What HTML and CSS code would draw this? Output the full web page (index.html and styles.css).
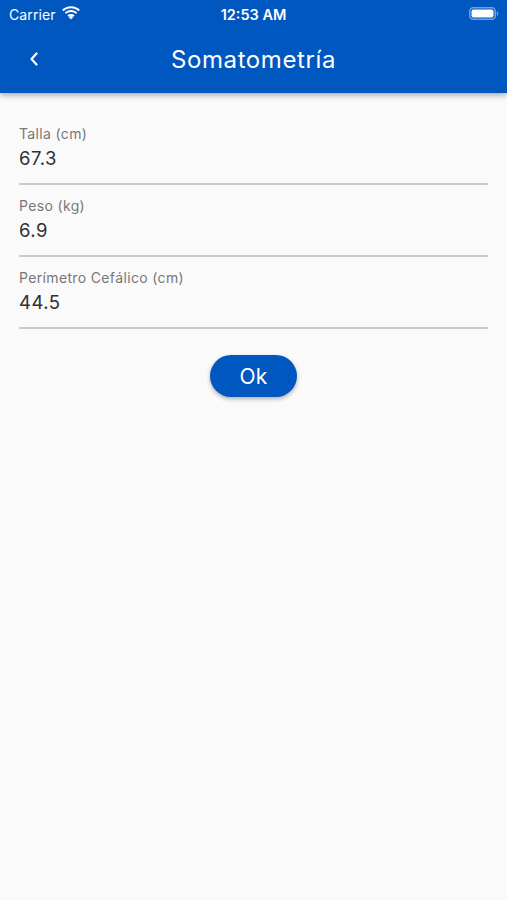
FILE: index.html
```html
<!DOCTYPE html>
<html lang="es">
<head>
    <meta charset="UTF-8">
    <meta name="viewport" content="width=device-width, initial-scale=1.0">
    <title>Somatometría</title>
    <link rel="stylesheet" href="styles.css">
</head>
<body>
    <header class="header">
        <div class="status-bar">
            <div class="status-left">
                <span class="carrier">Carrier</span>
                <svg class="wifi" width="18" height="14" viewBox="0 0 18 14">
                    <path d="M9 2.2c2.9 0 5.6 1.1 7.6 3l1.3-1.4C15.5 1.5 12.4.2 9 .2S2.5 1.5.1 3.8l1.3 1.4c2-1.9 4.7-3 7.6-3z" fill="#fff"/>
                    <path d="M9 6.1c1.9 0 3.6.7 4.9 1.9l1.3-1.4C13.6 5 11.4 4.1 9 4.1S4.4 5 2.8 6.6L4.1 8C5.4 6.8 7.1 6.1 9 6.1z" fill="#fff"/>
                    <path d="M9 10c.9 0 1.7.3 2.3.9L9 13.4 6.7 10.9c.6-.6 1.4-.9 2.3-.9z" fill="#fff"/>
                    <path d="M9 8c1.4 0 2.6.5 3.6 1.4l-1.3 1.4C10.7 10.3 9.9 10 9 10s-1.700.3-2.3.8L5.4 9.4C6.4 8.5 7.6 8 9 8z" fill="#fff"/>
                </svg>
            </div>
            <span class="time">12:53 AM</span>
            <div class="status-right">
                <svg class="battery" width="30" height="13" viewBox="0 0 30 13">
                    <rect x="0.75" y="0.75" width="25.5" height="11.5" rx="3.5" fill="none" stroke="rgba(255,255,255,0.45)" stroke-width="1.5"/>
                    <rect x="2.5" y="2.5" width="22" height="8" rx="2" fill="#fff"/>
                    <path d="M27.8 4.3c.9.3 1.5 1.1 1.5 2.2s-.6 1.9-1.5 2.2z" fill="rgba(255,255,255,0.45)"/>
                </svg>
            </div>
        </div>
        <div class="nav-bar">
            <svg class="back" width="10" height="14" viewBox="0 0 10 14">
                <path d="M7.5 1.5L2.5 7l5 5.5" fill="none" stroke="#fff" stroke-width="2.2" stroke-linecap="round" stroke-linejoin="round"/>
            </svg>
            <h1 class="title">Somatometría</h1>
        </div>
    </header>

    <main class="form">
        <div class="field">
            <div class="label">Talla (cm)</div>
            <div class="value">67.3</div>
        </div>
        <div class="field">
            <div class="label">Peso (kg)</div>
            <div class="value">6.9</div>
        </div>
        <div class="field">
            <div class="label">Perímetro Cefálico (cm)</div>
            <div class="value">44.5</div>
        </div>

        <div class="actions">
            <button class="ok">Ok</button>
        </div>
    </main>
</body>
</html>
```

FILE: styles.css
```css
body {
    margin: 0;
    font-family: Inter, Roboto, sans-serif;
    background-color: #fafafa;
    min-height: 900px;
}
.header {
    background-color: #0057bf;
    color: white;
    box-shadow: 0 2px 6px rgba(0, 0, 0, 0.35);
    position: relative;
}
.status-bar {
    height: 28px;
    display: flex;
    align-items: center;
    justify-content: space-between;
    padding: 0 8px 0 9px;
    position: relative;
}
.status-left {
    display: flex;
    align-items: center;
    gap: 6px;
}
.carrier {
    font-size: 14px;
    letter-spacing: 0.1px;
}
.wifi {
    margin-top: -2px;
}
.time {
    position: absolute;
    left: 0;
    right: 0;
    text-align: center;
    font-size: 14.5px;
    font-weight: 600;
}
.status-right {
    display: flex;
    align-items: center;
    margin-top: -1px;
}
.nav-bar {
    height: 65px;
    display: flex;
    align-items: center;
    justify-content: center;
    position: relative;
}
.back {
    position: absolute;
    left: 29px;
    top: 24px;
}
.title {
    margin: 0 0 2px;
    font-size: 24px;
    font-weight: 400;
    letter-spacing: 0.6px;
}
.form {
    padding: 20px 19px 0;
}
.field {
    padding: 12px 0 13px;
    border-bottom: 2px solid #c9c9c9;
}
.label {
    font-size: 14px;
    line-height: 17px;
    letter-spacing: 0.35px;
    color: #777;
}
.value {
    margin-top: 4px;
    font-size: 18.5px;
    line-height: 24px;
    letter-spacing: 0.5px;
    color: #303030;
}
.actions {
    display: flex;
    justify-content: center;
    margin-top: 26px;
}
.ok {
    width: 87px;
    height: 42px;
    border: none;
    border-radius: 21px;
    background-color: #0057bf;
    color: white;
    font-family: Inter, Roboto, sans-serif;
    font-size: 21px;
    letter-spacing: 0.3px;
    cursor: pointer;
    box-shadow: 0 2px 4px rgba(0, 0, 0, 0.3);
}
```
